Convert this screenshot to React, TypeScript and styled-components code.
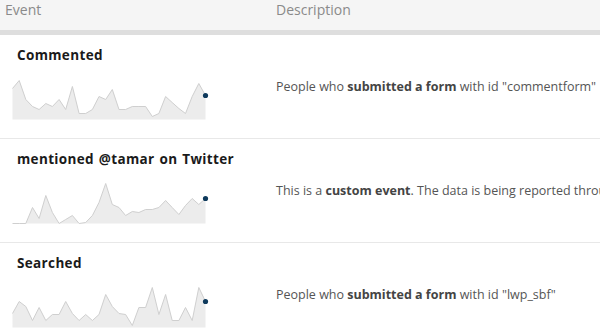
import React from 'react'
import styled, { createGlobalStyle } from 'styled-components'

const GlobalStyle = createGlobalStyle`
  html, body {
    margin: 0;
    padding: 0;
    background: #fff;
    overflow: hidden;
  }
  body {
    font-family: 'Open Sans', 'Liberation Sans', sans-serif;
  }
`

type EventRow = {
  name: string
  description: React.ReactNode
  data: number[]
}

const rows: EventRow[] = [
  {
    name: 'Commented',
    description: (
      <>
        People who <b>submitted a form</b> with id "commentform"
      </>
    ),
    data: [31, 39, 20, 13, 10, 16, 13, 20, 10, 33, 6, 6, 10, 23, 20, 30, 10, 10, 13, 13, 13, 3, 6, 23, 17, 11, 6, 23, 36, 24],
  },
  {
    name: 'mentioned @tamar on Twitter',
    description: (
      <>
        This is a <b>custom event</b>. The data is being reported through the API
      </>
    ),
    data: [0, 0, 0, 16, 5, 28, 11, 0, 4, 8, 0, 1, 8, 21, 40, 19, 16, 8, 12, 11, 14, 14, 16, 23, 16, 9, 18, 25, 19, 25],
  },
  {
    name: 'Searched',
    description: (
      <>
        People who <b>submitted a form</b> with id "lwp_sbf"
      </>
    ),
    data: [14, 26, 21, 7, 20, 7, 13, 13, 26, 14, 7, 13, 7, 13, 33, 21, 14, 13, 2, 20, 20, 40, 13, 33, 7, 7, 20, 7, 40, 26],
  },
]

const CHART_W = 193
const CHART_H = 40

const Sparkline: React.FC<{ data: number[] }> = ({ data }) => {
  const step = CHART_W / (data.length - 1)
  const pts = data.map((v, i) => [i * step + 0.5, CHART_H - v + 0.5])
  const line = pts.map(([x, y]) => `${x.toFixed(1)},${y.toFixed(1)}`).join(' ')
  const area = `0.5,${CHART_H + 0.5} ${line} ${(CHART_W + 0.5).toFixed(1)},${CHART_H + 0.5}`
  const last = pts[pts.length - 1]
  return (
    <ChartSvg width={CHART_W + 4} height={CHART_H + 1} viewBox={`0 0 ${CHART_W + 4} ${CHART_H + 1}`}>
      <polygon points={area} fill="#ececec" />
      <polyline points={line} fill="none" stroke="#cfcfcf" strokeWidth={1} />
      <circle cx={last[0]} cy={last[1]} r={2.6} fill="#0e3a5c" />
    </ChartSvg>
  )
}

const App: React.FC = () => {
  return (
    <>
      <GlobalStyle />
      <Table>
        <HeaderRow>
          <HeadCell>Event</HeadCell>
          <HeadCell>Description</HeadCell>
        </HeaderRow>
        {rows.map((row) => (
          <Row key={row.name}>
            <EventCell>
              <EventName>{row.name}</EventName>
              <Sparkline data={row.data} />
            </EventCell>
            <DescCell>
              <DescText>{row.description}</DescText>
            </DescCell>
          </Row>
        ))}
      </Table>
    </>
  )
}

const Table = styled.div`
  width: 600px;
  overflow: hidden;
`

const HeaderRow = styled.div`
  display: grid;
  grid-template-columns: 271px 1fr;
  height: 30px;
  background: #f5f5f5;
  border-bottom: 5px solid #dedede;
`

const HeadCell = styled.div`
  padding: 2px 5px 0;
  font-size: 14px;
  line-height: 16px;
  color: #8a8a8a;
`

const Row = styled.div`
  display: grid;
  grid-template-columns: 271px 1fr;
  height: 104px;
  box-sizing: border-box;
  border-bottom: 1px solid #e8e8e8;
`

const EventCell = styled.div`
  display: flex;
  flex-direction: column;
  align-items: flex-start;
  padding: 12px 0 0 12px;
`

const EventName = styled.div`
  padding-left: 5px;
  font-size: 13.5px;
  line-height: 16px;
  font-weight: 700;
  letter-spacing: 0.35px;
  word-spacing: 1px;
  color: #1a1a1a;
  white-space: nowrap;
  margin-bottom: 16px;
`

const ChartSvg = styled.svg`
  display: block;
`

const DescCell = styled.div`
  display: flex;
  align-items: center;
  padding-left: 5px;
  overflow: hidden;
`

const DescText = styled.span`
  font-size: 12.5px;
  color: #555;
  white-space: nowrap;

  b {
    font-weight: 700;
    color: #444;
  }
`

export default App
